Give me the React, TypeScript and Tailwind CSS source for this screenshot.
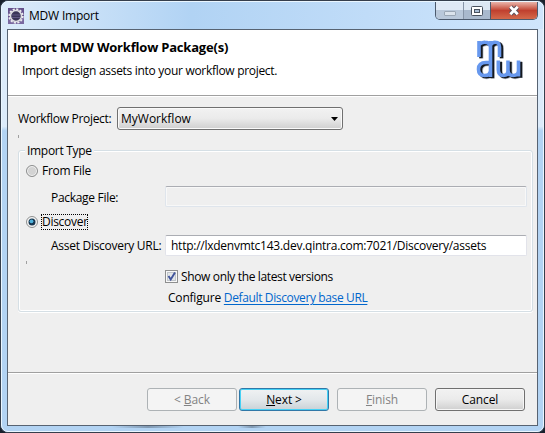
import type { ReactNode } from "react";

function EclipseIcon() {
  return (
    <svg className="h-4 w-4 shrink-0" viewBox="0 0 16 16">
      <rect width="16" height="16" fill="#65518c" />
      <rect y="10" width="16" height="6" fill="#7a68a0" />
      <circle cx="8" cy="8" r="6.8" fill="none" stroke="#ededf0" strokeWidth="1.8" strokeDasharray="2.15 1.41" />
      <circle cx="8" cy="8" r="5.5" fill="#3a3558" stroke="#dddde2" strokeWidth="1.5" />
      <path d="M4 7h8M4 9.5h8" stroke="#6b6392" strokeWidth="0.8" />
    </svg>
  );
}

function MdwLogo() {
  const glyph = "M479 41v16M479 44.500q3-2.500 6-2.200q4 0 5 3.500M490.500 41v36M490.500 45q2-3 5-2.700q4 .2 4 5v9.700M490 62.500h-4q-7.500 0-7.500 6.800q0 6.200 6 6.200q5.500 0 5.500-4M498.300 60.500v9q0 6 5 6q4.700 0 4.700-5v-10M508 70q0 5.500 5 5.500q5.500 0 5.500-5v-10M518.500 60.500v16";
  return (
    <svg className="h-[42px] w-[50px]" viewBox="475 39 50 42" fill="none">
      <path d={glyph} stroke="#6d7c92" strokeWidth="4.400" transform="translate(2.300 1.500)" opacity="0.45" />
      <path d={glyph} stroke="#15191f" strokeWidth="3.400" transform="translate(2 1.200)" />
      <path d={glyph} stroke="#6798ee" strokeWidth="3.600" />
    </svg>
  );
}

function CaptionButtons() {
  return (
    <div className="flex h-[18px] w-[103px] overflow-hidden rounded-b-[5px] border border-t-0 border-[#4c5a6d]">
      <div className="flex w-[28px] items-center justify-center border-r border-[#8795a8] bg-linear-to-b from-[#dfe9f5] from-50% to-[#b9c8da] to-50%">
        <div className="mt-[5px] h-[5px] w-3 rounded-[1px] border border-[#9ba7b5] bg-[#dbe3ec]" />
      </div>
      <div className="flex w-[27px] items-center justify-center border-r border-[#4c5a6d] bg-linear-to-b from-[#dce7f3] from-50% to-[#a9b9cd] to-50%">
        <svg className="h-[10px] w-3" viewBox="0 0 12 10">
          <rect x=".5" y=".5" width="11" height="9" rx="1" fill="#fff" stroke="#48515e" />
          <rect x="3.500" y="3.500" width="5" height="3" fill="#a9bdd5" stroke="#48515e" />
        </svg>
      </div>
      <div className="flex flex-1 items-center justify-center bg-linear-to-b from-[#e8b4ab] via-[#c0402f] via-50% to-[#d4694b]">
        <svg className="h-[11px] w-3" viewBox="0 0 12 11">
          <path d="M2.500 2l7 7M9.500 2l-7 7" stroke="#5b5059" strokeWidth="4.600" />
          <path d="M2.300 1.800l7.400 7.400M9.700 1.800l-7.400 7.400" stroke="#fff" strokeWidth="2.700" />
        </svg>
      </div>
    </div>
  );
}

function DialogButton({ className, children }: { className: string; children: ReactNode }) {
  return (
    <button className={"h-[23px] w-[90px] rounded-[3px] border text-center leading-[20px] tracking-[-0.1px] " + className}>
      {children}
    </button>
  );
}

const disabledButton = "border-[#adb2b5] bg-[#f4f4f4] text-[#838383]";

export default function App() {
  return (
    <div className="h-[433px] w-[545px] overflow-hidden bg-[#18202c] font-['Open_Sans','Noto_Sans',sans-serif] text-[12px] leading-4 text-black">
      <div className="flex h-[433px] flex-col rounded-[8px] border border-[#353e4c] bg-[#b5d5f5]">
        <div className="flex h-[431px] flex-col rounded-[7px] border border-[#eaf6ff] bg-linear-to-b from-[#dcebfa] from-29% to-[#b2d3f3] to-30% px-[5px]">
          <div className="-mx-[5px] flex h-[27px] shrink-0 items-start justify-between rounded-t-[6px] bg-linear-to-r from-[#dcebfa] via-[#b1d3f4] via-35% to-[#cfe5fc] pl-[6px] pr-[5px]">
            <div className="flex items-center gap-[5px] pt-[5px]">
              <EclipseIcon />
              <span className="pt-px tracking-[-0.2px]">MDW Import</span>
            </div>
            <CaptionButtons />
          </div>
          <main className="flex min-h-0 flex-1 flex-col border border-[#576372] bg-[#efefef]">
            <header className="flex h-[66px] shrink-0 justify-between border-b border-[#a0a0a0] bg-white">
              <div className="pt-[9px] pl-[5px]">
                <h1 className="text-[13px] leading-4 font-bold tracking-[-0.2px]">Import MDW Workflow Package(s)</h1>
                <p className="mt-[8px] pl-[9px] tracking-[-0.3px]">Import design assets into your workflow project.</p>
              </div>
              <div className="pt-[9px] pr-[12px]"><MdwLogo /></div>
            </header>
            <div className="flex h-[276px] shrink-0 flex-col border-t border-white pl-[10px] pr-[4px]">
              <div className="mt-[10px] flex h-[23px] items-center">
                <label className="w-[99px] pt-px tracking-[-0.3px]">Workflow Project:</label>
                <div className="flex h-[23px] w-[226px] items-center justify-between rounded-[3px] border border-[#707070] bg-linear-to-b from-[#f2f2f2] via-[#ebebeb] via-49% to-[#cfcfcf] pr-[4px] pl-[3px] shadow-[inset_0_0_0_1px_#fafafa]">
                  <span className="pt-px">MyWorkflow</span>
                  <svg className="h-1 w-[7px]" viewBox="0 0 7 4"><path d="M0 0h7L3.500 4z" /></svg>
                </div>
              </div>
              <div className="mt-[5px] h-[3px] w-px bg-[#a0a0a0]" />
              <fieldset className="relative mt-[12px] h-[162px] w-[515px] rounded-[3px] border border-[#d5dfe5] shadow-[inset_0_0_0_1px_white,0_1px_0_white]">
                <span className="absolute -top-[8px] left-[6px] bg-[#efefef] px-[2px] tracking-[-0.3px]">Import Type</span>
                <div className="mt-[12px] flex h-4 items-center gap-1 pl-[7px]">
                  <span className="h-3 w-3 rounded-full border border-[#8e8f8f] bg-[#d3d3d3] shadow-[inset_0_0_0_1px_#f4f4f4]" />
                  <span className="tracking-[-0.3px]">From File</span>
                </div>
                <div className="mt-[7px] flex h-[21px] items-center pl-[32px]">
                  <label className="w-[114px] pt-[2px] tracking-[-0.3px]">Package File:</label>
                  <div className="h-[21px] w-[362px] rounded-[2px] border border-[#dfe5ec] border-t-[#abadb3] shadow-[inset_0_0_0_1px_#f8f8f8]" />
                </div>
                <div className="mt-[7px] flex h-4 items-center gap-[3px] pl-[7px]">
                  <svg className="h-3 w-3" viewBox="0 0 12 12">
                    <circle cx="6" cy="6" r="5.500" fill="#f4f4f4" stroke="#8e8f8f" />
                    <circle cx="6" cy="6" r="3.500" fill="#17364f" />
                    <circle cx="5.500" cy="5.300" r="1.900" fill="#4eb2dc" />
                  </svg>
                  <span className="h-4 w-[47px] border border-dotted border-black leading-[14px] tracking-[-0.28px]">Discover</span>
                </div>
                <div className="mt-[5px] flex h-[21px] items-center pl-[32px]">
                  <label className="w-[114px] pt-px tracking-[-0.28px]">Asset Discovery URL:</label>
                  <div className="h-[21px] w-[362px] rounded-[2px] border border-[#e2e3ea] border-t-[#abadb3] bg-white pl-[5px] leading-[20px] tracking-[-0.25px]">http://lxdenvmtc143.dev.qintra.com:7021/Discovery/assets</div>
                </div>
                <div className="mt-[5px] ml-[7px] h-[3px] w-px bg-[#a0a0a0]" />
                <div className="mt-[4px] flex h-4 items-center gap-[3px] pl-[146px]">
                  <svg className="h-[13px] w-[13px]" viewBox="0 0 13 13">
                    <rect x=".5" y=".5" width="12" height="12" fill="#f8f8f8" stroke="#8e8f8f" />
                    <rect x="2.500" y="2.500" width="8" height="8" fill="#e3e6e8" stroke="#c0c5ca" />
                    <path d="M3.500 6l2.200 3.500L10 2.500" fill="none" stroke="#41549b" strokeWidth="1.900" />
                  </svg>
                  <span className="pt-[2px] tracking-[-0.36px]">Show only the latest versions</span>
                </div>
                <div className="mt-[6px] pl-[149px]">
                  <span className="tracking-[-0.2px]">Configure </span>
                  <a className="tracking-[-0.37px] text-[#0066cc] underline underline-offset-2">Default Discovery base URL</a>
                </div>
              </fieldset>
            </div>
            <footer className="flex flex-1 items-start border-t border-[#a0a0a0] pt-[15px] pl-[139px] shadow-[inset_0_1px_0_white]">
              <DialogButton className={disabledButton}>&lt; <u>B</u>ack</DialogButton>
              <DialogButton className="ml-[2px] border-[#3078a8] bg-linear-to-b from-[#f0f2f3] via-[#e3e8eb] via-50% to-[#c9d1d6] shadow-[inset_0_0_0_1px_#45d1f5]"><u>N</u>ext &gt;</DialogButton>
              <DialogButton className={"ml-[8px] " + disabledButton}><u>F</u>inish</DialogButton>
              <DialogButton className="ml-[8px] border-[#707070] bg-linear-to-b from-[#f2f2f2] via-[#ebebeb] via-49% to-[#cfcfcf] shadow-[inset_0_0_0_1px_#f6f6f6]">Cancel</DialogButton>
            </footer>
          </main>
          <div className="flex h-[5px] shrink-0 items-start pl-[105px]">
            <div className="h-[2px] w-[72px] bg-linear-to-r from-transparent via-[#8099b3] to-transparent" />
            <div className="ml-[54px] h-[2px] w-[28px] bg-linear-to-r from-transparent via-[#8099b3] to-transparent" />
          </div>
        </div>
      </div>
    </div>
  );
}
